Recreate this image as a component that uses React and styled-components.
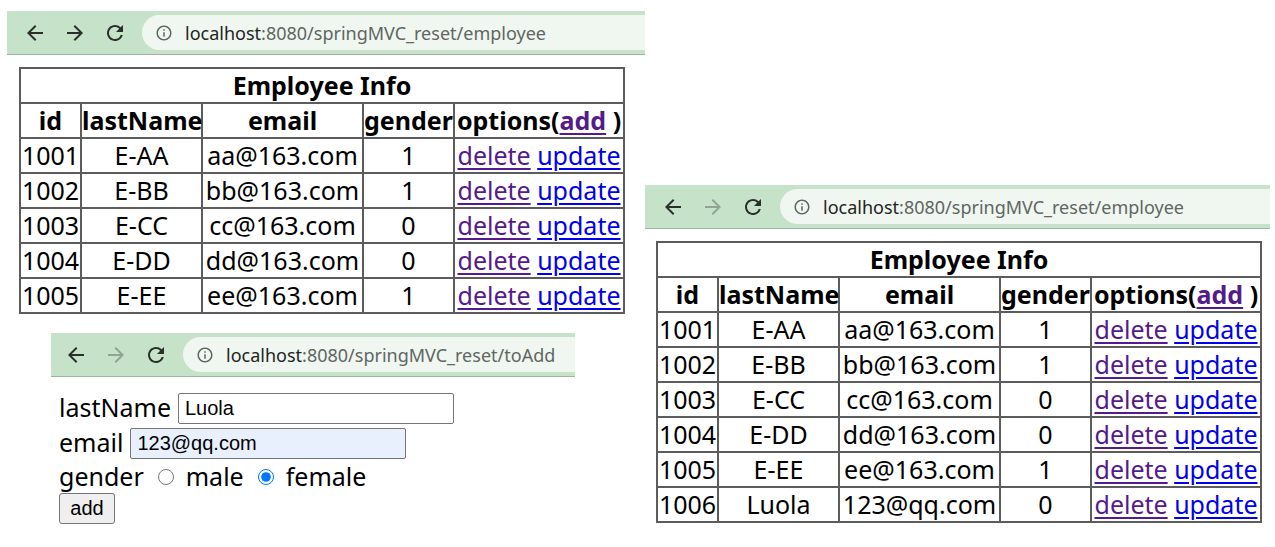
import React from 'react';
import styled, { createGlobalStyle } from 'styled-components';

const GlobalStyle = createGlobalStyle`
  body {
    margin: 0;
    background: #ffffff;
    font-family: "Noto Sans", "Open Sans", sans-serif;
  }
`;

// 캔버스: 세 장의 스크린샷을 붙여놓은 바탕
const Canvas = styled.div`
  position: relative;
  width: 1275px;
  height: 547px;
  background: #ffffff;
  overflow: hidden;
`;

// 각 스크린샷 창 (캔버스 위 자유 배치)
const Shot = styled.section`
  position: absolute;
  left: ${(p) => p.$x}px;
  top: ${(p) => p.$y}px;
  width: ${(p) => p.$w}px;
  display: flex;
  flex-direction: column;
`;

const Bar = styled.div`
  height: 44px;
  box-sizing: border-box;
  background: #c6e2c9;
  border-bottom: 1px solid #9fb3a2;
  display: flex;
  align-items: flex-start;
  padding-left: ${(p) => p.$pad}px;
  overflow: hidden;
`;

const NavIcons = styled.div`
  display: flex;
  align-items: center;
  gap: 16px;
  height: 35px;
  margin-top: 4px;
`;

const NavIcon = styled.svg`
  width: 24px;
  height: 24px;
  fill: ${(p) => (p.$dim ? '#8fa592' : '#2b2f2c')};
`;

const Pill = styled.div`
  flex: 1 0 auto;
  margin: 4px -40px 0 15px;
  height: 35px;
  border-radius: 18px;
  background: #eff7f0;
  display: flex;
  align-items: center;
  padding-left: 13px;
  gap: 12px;
  font-size: 18px;
  color: #5f6663;
  white-space: nowrap;
`;

const InfoIcon = styled.svg`
  width: 18px;
  height: 18px;
  fill: #5f6663;
`;

const Host = styled.span`
  color: #1f2421;
`;

const Table = styled.table`
  table-layout: fixed;
  border-collapse: collapse;
  width: 604px;
  margin: 12px 0 0 ${(p) => p.$indent}px;
  border: 2px solid #4f4f4f;
  font-size: 25px;
  color: #000;
`;

const Cell = styled.td`
  border: 2px solid #5c5c5c;
  height: 33px;
  padding: 0;
  text-align: center;
  line-height: 1;
  white-space: nowrap;
  overflow: visible;
`;

const Head = styled(Cell).attrs({ as: 'th' })`
  font-weight: 700;
`;

const Link = styled.a`
  color: ${(p) => (p.$visited ? '#551a8b' : '#0000ee')};
  text-decoration: underline;
  text-underline-offset: 3px;
`;

const Form = styled.form`
  display: flex;
  flex-direction: column;
  align-items: flex-start;
  padding: 12px 0 0 8px;
  font-size: 25px;
`;

const Row = styled.div`
  display: flex;
  align-items: center;
  height: ${(p) => p.$h || 35}px;
  white-space: nowrap;
`;

const TextInput = styled.input`
  width: 276px;
  height: 31px;
  box-sizing: border-box;
  margin: 3px 0 0 7px;
  border: 1px solid #767676;
  border-radius: 2px;
  padding: 0 6px;
  font-family: "Liberation Sans", Arial, sans-serif;
  font-size: 20px;
  color: #000;
  background: ${(p) => (p.$filled ? '#e8f0fe' : '#fff')};
`;

const Radio = styled.input.attrs({ type: 'radio', name: 'gender' })`
  width: 16px;
  height: 16px;
  margin: 3px 12px 0 14px;
  accent-color: #0075ff;
`;

const Button = styled.button`
  margin-top: 1px;
  width: 56px;
  height: 31px;
  border: 1px solid #767676;
  border-radius: 3px;
  background: #efefef;
  font-family: "Liberation Sans", Arial, sans-serif;
  font-size: 20px;
  color: #000;
  padding: 0;
`;

const ArrowLeft = 'M20 11H7.83l5.59-5.59L12 4l-8 8 8 8 1.41-1.41L7.83 13H20v-2z';
const ArrowRight = 'M4 11h12.17l-5.59-5.59L12 4l8 8-8 8-1.41-1.41L16.17 13H4v-2z';
const Reload =
  'M17.65 6.35A7.958 7.958 0 0 0 12 4c-4.42 0-7.99 3.58-7.99 8s3.57 8 7.99 8c3.73 0 6.84-2.55 7.73-6h-2.08A5.99 5.99 0 0 1 12 18c-3.31 0-6-2.69-6-6s2.69-6 6-6c1.66 0 3.14.69 4.22 1.78L13 11h7V4l-2.35 2.35z';
const Info =
  'M11 7h2v2h-2zm0 4h2v6h-2zm1-9C6.48 2 2 6.48 2 12s4.48 10 10 10 10-4.48 10-10S17.52 2 12 2zm0 18c-4.41 0-8-3.59-8-8s3.59-8 8-8 8 3.59 8 8-3.59 8-8 8z';

const BrowserBar = ({ path, pad = 16, fwdDim }) => (
  <Bar $pad={pad}>
    <NavIcons>
      <NavIcon viewBox="0 0 24 24"><path d={ArrowLeft} /></NavIcon>
      <NavIcon viewBox="0 0 24 24" $dim={fwdDim}><path d={ArrowRight} /></NavIcon>
      <NavIcon viewBox="0 0 24 24"><path d={Reload} /></NavIcon>
    </NavIcons>
    <Pill>
      <InfoIcon viewBox="0 0 24 24"><path d={Info} /></InfoIcon>
      <span>
        <Host>localhost</Host>:8080/springMVC_reset/{path}
      </span>
    </Pill>
  </Bar>
);

const baseRows = [
  ['1001', 'E-AA', 'aa@163.com', 1],
  ['1002', 'E-BB', 'bb@163.com', 1],
  ['1003', 'E-CC', 'cc@163.com', 0],
  ['1004', 'E-DD', 'dd@163.com', 0],
  ['1005', 'E-EE', 'ee@163.com', 1],
];

const EmployeeTable = ({ rows, indent }) => (
  <Table $indent={indent}>
    <colgroup>
      <col style={{ width: 61 }} />
      <col style={{ width: 121 }} />
      <col style={{ width: 161 }} />
      <col style={{ width: 91 }} />
      <col style={{ width: 170 }} />
    </colgroup>
    <tbody>
      <tr>
        <Head colSpan={5}>Employee Info</Head>
      </tr>
      <tr>
        <Head>id</Head>
        <Head>lastName</Head>
        <Head>email</Head>
        <Head>gender</Head>
        <Head>
          options(<Link $visited href="#">add</Link> )
        </Head>
      </tr>
      {rows.map(([id, name, email, gender]) => (
        <tr key={id}>
          <Cell>{id}</Cell>
          <Cell>{name}</Cell>
          <Cell>{email}</Cell>
          <Cell>{gender}</Cell>
          <Cell>
            <Link $visited href="#">delete</Link> <Link href="#">update</Link>
          </Cell>
        </tr>
      ))}
    </tbody>
  </Table>
);

export default function App() {
  return (
    <>
      <GlobalStyle />
      <Canvas>
        <Shot $x={7} $y={11} $w={638}>
          <BrowserBar path="employee" />
          <EmployeeTable rows={baseRows} indent={12} />
        </Shot>

        <Shot $x={51} $y={333} $w={524}>
          <BrowserBar path="toAdd" pad={13} fwdDim />
          <Form onSubmit={(e) => e.preventDefault()}>
            <Row>
              lastName
              <TextInput defaultValue="Luola" />
            </Row>
            <Row>
              email
              <TextInput $filled defaultValue="123@qq.com" />
            </Row>
            <Row $h={33}>
              gender
              <Radio value="male" />
              male
              <Radio value="female" defaultChecked />
              female
            </Row>
            <Button type="submit">add</Button>
          </Form>
        </Shot>

        <Shot $x={645} $y={185} $w={625}>
          <BrowserBar path="employee" fwdDim />
          <EmployeeTable
            rows={[...baseRows, ['1006', 'Luola', '123@qq.com', 0]]}
            indent={11}
          />
        </Shot>
      </Canvas>
    </>
  );
}
